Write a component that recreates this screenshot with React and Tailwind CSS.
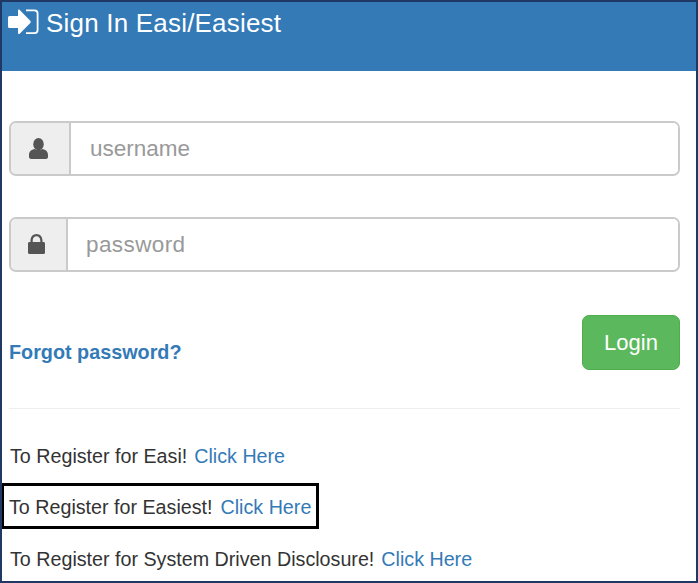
const font = { fontFamily: '"Liberation Sans", Arial, sans-serif' }

function LoginIcon() {
    return (
        <svg viewBox="0 0 31 26" className="w-[31px] h-[26px] shrink-0" fill="white">
            <path d="M0 8.500a1.500 1.500 0 0 1 1.500-1.500H10V1.600c0-.9 1-1.300 1.700-.7l10.600 10.800c.6.7.6 1.600 0 2.300L11.700 24.800c-.7.6-1.700.2-1.700-.7V19H1.500A1.500 1.500 0 0 1 0 17.500z" />
            <path d="M18 .5h8.500A4 4 0 0 1 30.500 4.500v16.500a4 4 0 0 1-4 4H18v-1.800h8.200a2.500 2.500 0 0 0 2.500-2.500V4.800a2.500 2.500 0 0 0-2.500-2.500H18z" />
        </svg>
    )
}

function UserIcon() {
    return (
        <svg viewBox="0 0 20 22" className="w-[19px] h-[21px]" fill="#555555">
            <ellipse cx="10" cy="6.500" rx="5.500" ry="6.500" />
            <path d="M0 18c0-4 2.500-6 6-6.500 2.500 1.500 5.500 1.500 8 0 3.500.5 6 2.500 6 6.500v2c0 1.200-1 2-2.500 2h-15C1 22 0 21.200 0 20z" />
        </svg>
    )
}

function LockIcon() {
    return (
        <svg viewBox="0 0 17 20" className="w-[17px] h-[20px] -mt-[2px]" fill="#555555">
            <path fillRule="evenodd" d="M2.500 8V6.500C2.500 2.800 5 0 8.500 0s6 2.800 6 6.500V8h1c.9 0 1.500.6 1.500 1.500v9c0 .9-.6 1.500-1.500 1.500h-14C.6 20 0 19.400 0 18.500v-9C0 8.600.6 8 1.500 8zm2.200 0h7.600V6.500c0-2.400-1.600-4.200-3.800-4.200S4.700 4.100 4.700 6.500z" />
        </svg>
    )
}

function InputRow({ icon, addonWidth, inputClass, placeholder, type }) {
    return (
        <div className="flex h-[55px] rounded-[7px] border-2 border-[#cacaca] overflow-hidden bg-white">
            <div className={`${addonWidth} shrink-0 flex items-center justify-center bg-[#eeeeee] border-r-2 border-[#cacaca] pr-[4px]`}>
                {icon}
            </div>
            <input
                type={type}
                placeholder={placeholder}
                readOnly
                className={`flex-1 min-w-0 ${inputClass} text-[22.500px] text-[#555555] placeholder:text-[#999999] outline-none bg-white`}
            />
        </div>
    )
}

function RegisterLine({ label, boxed }) {
    return (
        <p className={`text-[19.700px] leading-[23px] text-[#333333] whitespace-nowrap ${boxed ? 'w-[318px] h-[46px] -ml-[1px] pl-[5px] pt-[3px] flex items-center gap-[8px] border-[3px] border-black' : 'pl-[8px] flex gap-[7px]'}`}>
            <span>{label}</span>
            <a className="text-[#337ab7]">Click Here</a>
        </p>
    )
}

export default function App() {
    return (
        <div className="w-[698px] h-[583px] bg-white border-2 border-[#1f3864] overflow-hidden" style={font}>
            {/* Header */}
            <div className="h-[69px] bg-[#337ab7] pl-[6px] pt-[7px] flex items-start gap-[7px] text-white">
                <LoginIcon />
                <h1 className="text-[26px] leading-[30px] -mt-[1px] tracking-[0.2px]">Sign In Easi/Easiest</h1>
            </div>

            <div className="pl-[7px] pr-[16px] pt-[50px]">
                <div className="flex flex-col gap-[41px]">
                    <InputRow icon={<UserIcon />} addonWidth="w-[60px]" inputClass="pl-[19px]" placeholder="username" type="text" />
                    <InputRow icon={<LockIcon />} addonWidth="w-[57px]" inputClass="pl-[18px] tracking-[0.4px]" placeholder="password" type="password" />
                </div>

                <div className="mt-[43px] flex items-end justify-between">
                    <a className="text-[19.800px] leading-[24px] font-bold text-[#337ab7] mb-[6px]">Forgot password?</a>
                    <button className="w-[98px] h-[55px] rounded-[7px] bg-[#5cb85c] border border-[#4cae4c] text-white text-[22px]">Login</button>
                </div>

                <div className="mt-[38px] border-t border-[#eeeeee]" />
            </div>

            <div className="mt-[36px] flex flex-col">
                <RegisterLine label="To Register for Easi!" />
                <div className="mt-[15px]">
                    <RegisterLine label="To Register for Easiest!" boxed />
                </div>
                <div className="mt-[19px]">
                    <RegisterLine label="To Register for System Driven Disclosure!" />
                </div>
            </div>
        </div>
    )
}
